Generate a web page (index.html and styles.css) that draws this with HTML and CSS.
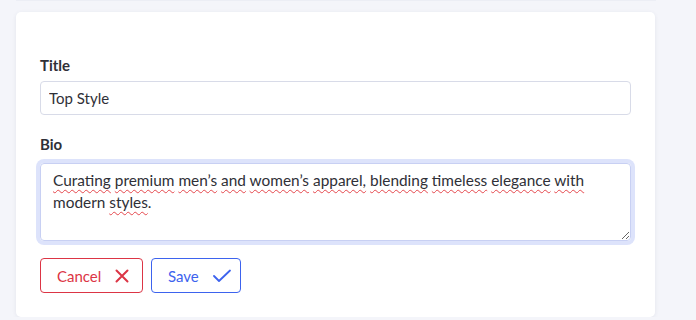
FILE: index.html
```html
<!DOCTYPE html>
<html lang="en">
<head>
  <meta charset="UTF-8">
  <meta name="viewport" content="width=device-width, initial-scale=1.0">
  <title>Edit Profile</title>
  <link rel="stylesheet" href="styles.css">
</head>
<body>
  <div class="card-top"></div>
  <form class="card" id="profile">
    <label class="field-label" for="title">Title</label>
    <input class="field-input" id="title" name="title" type="text" value="Top Style">

    <label class="field-label bio-label" for="bio">Bio</label>
    <div class="field-text" id="bio" role="textbox" aria-multiline="true" contenteditable="true" spellcheck="false"><span class="typo">Curating</span> <span class="typo">premium</span> <span class="typo">men’s</span> <span class="typo">and</span> <span class="typo">women’s</span> <span class="typo">apparel,</span> <span class="typo">blending</span> <span class="typo">timeless</span> <span class="typo">elegance</span> <span class="typo">with</span> modern <span class="typo">styles</span>.</div>

    <div class="actions">
      <button type="button" class="btn btn-cancel">
        Cancel
        <svg class="icon-x" width="14" height="14" viewBox="0 0 14 14">
          <path d="M1.5 1.5 L12.5 12.5 M12.5 1.5 L1.5 12.5" stroke="currentColor" stroke-width="2" fill="none" stroke-linecap="round"/>
        </svg>
      </button>
      <button type="submit" class="btn btn-save">
        Save
        <svg class="icon-check" width="18" height="14" viewBox="0 0 18 14">
          <path d="M1 7 L6 12 L17 1.5" stroke="currentColor" stroke-width="1.8" fill="none" stroke-linecap="round" stroke-linejoin="round"/>
        </svg>
      </button>
    </div>
  </form>
</body>
</html>
```

FILE: styles.css
```css
body {
  font-family: "Source Sans Pro", Lato, "Noto Sans", sans-serif;
  background: #f4f5fa;
  margin: 0;
  color: #3a3b45;
}

.card-top {
  height: 1px;
  margin: 0 40px 0 16px;
  background: #eceef5;
}

.card {
  display: flex;
  flex-direction: column;
  box-sizing: border-box;
  width: 639px;
  height: 305px;
  margin: 11px 0 0 16px;
  padding: 42px 24px 24px;
  background: #fff;
  border-radius: 5px;
  box-shadow: 0 1px 4px rgba(40, 45, 90, 0.08);
}

.field-label {
  font-size: 15px;
  font-weight: 700;
  line-height: 22px;
  color: #2f3037;
  margin-bottom: 5px;
}

.bio-label {
  margin-top: 18px;
  margin-bottom: 8px;
}

.field-input {
  box-sizing: border-box;
  height: 34px;
  padding: 0 8px;
  border: 1px solid #d8dbe8;
  border-radius: 4px;
  font: inherit;
  font-size: 15px;
  color: #2f3037;
  outline: none;
}

.field-text {
  box-sizing: border-box;
  height: 78px;
  padding: 5px 12px;
  border: 1px solid #c8d0f3;
  border-radius: 4px;
  box-shadow: 0 0 0 4px #dde3fb;
  font-size: 15.4px;
  line-height: 22px;
  color: #2f3037;
  overflow: auto;
  resize: both;
  outline: none;
}

.typo {
  text-decoration: underline wavy #e5484d;
  text-decoration-thickness: 1px;
  text-underline-offset: 3px;
}

.actions {
  display: flex;
  gap: 8px;
  margin-top: 17px;
}

.btn {
  display: flex;
  align-items: center;
  box-sizing: border-box;
  height: 35px;
  padding: 0 0 0 16px;
  background: #fff;
  border-radius: 4px;
  font: inherit;
  font-size: 15px;
  cursor: pointer;
}

.btn svg {
  flex-shrink: 0;
}

.btn-cancel {
  width: 103px;
  color: #dc3545;
  border: 1px solid #dc3545;
}

.btn-save {
  width: 90px;
  color: #3d63ee;
  border: 1px solid #3d63ee;
}

.icon-x {
  margin-left: 14px;
}

.icon-check {
  margin-left: 14px;
}
```
